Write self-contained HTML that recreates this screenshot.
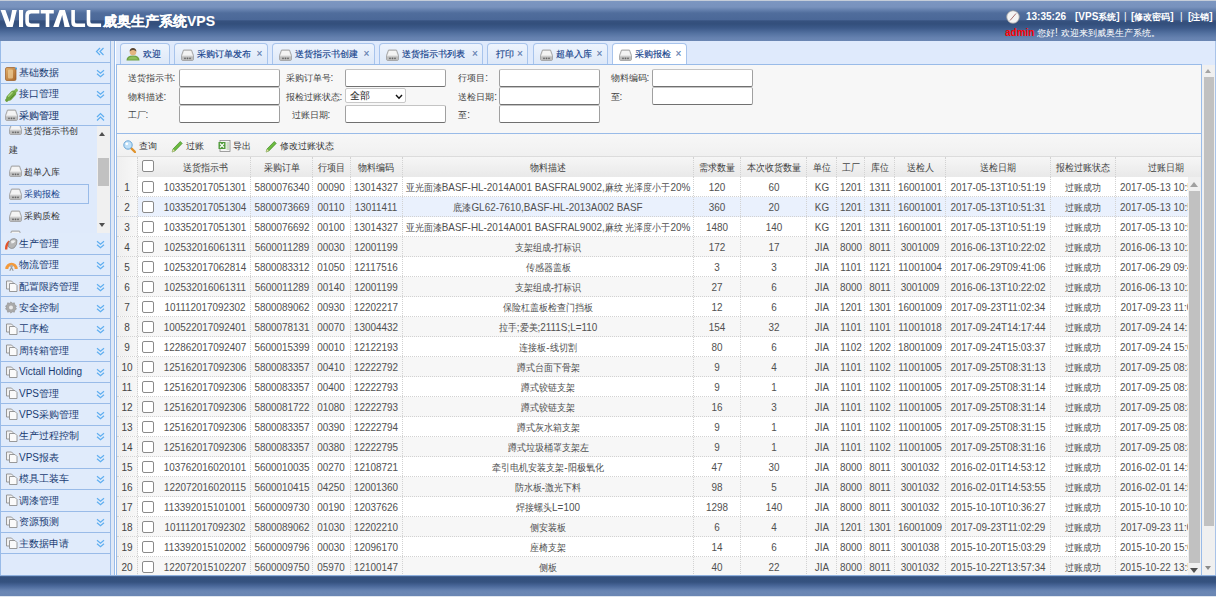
<!DOCTYPE html>
<html><head><meta charset="utf-8">
<style>
*{box-sizing:border-box;margin:0;padding:0}
html,body{width:1216px;height:597px;overflow:hidden}
body{position:relative;font-family:"Liberation Sans",sans-serif;font-size:10px;color:#333;background:#fff}
.a{position:absolute}
#hdr{position:absolute;left:0;top:0;width:1216px;height:41px;background:linear-gradient(to bottom,#c5cdd9 0,#c5cdd9 1px,#7c96c0 1px,#7892bd 7px,#6480ad 10px,#506d9c 13px,#4b6898 19.5px,#36517e 21px,#334f7c 24px,#3c5989 28px,#52709f 33px,#6682b0 38px,#6a86b3 41px)}
#title{position:absolute;left:103px;top:13px;font-size:14px;font-weight:bold;color:#fff;-webkit-text-stroke:0.1px #fff;line-height:16px;white-space:nowrap}
.ht{position:absolute;color:#fff;font-weight:bold;font-size:10px;line-height:12px;white-space:nowrap}
#foot{position:absolute;left:0;top:575px;width:1216px;height:21px;background:linear-gradient(to bottom,#8fb0dd 0,#8fb0dd 1px,#33507e 1.6px,#35527f 7px,#4a689a 11px,#6481b0 15px,#6b87b4 17px,#6a86b3 21px)}
#footline{position:absolute;left:0;top:596px;width:1216px;height:1px;background:#dfe6ef}
/* sidebar */
#side{position:absolute;left:0;top:41px;width:111px;height:534px;background:#dfeafb;border-left:1px solid #99bbe8;border-right:1px solid #99bbe8}
#sidegap{position:absolute;left:111px;top:41px;width:4px;height:534px;background:#dfe8f6;border-right:1px solid #99bbe8}
.srow{position:absolute;left:0;width:109px;height:21.33px;border-bottom:1px solid #99bbe8;background:#e0ebfb}
.stx{position:absolute;left:18px;top:4.6px;font-size:10px;line-height:12px;color:#1a3c73;white-space:nowrap}
.stx.b{-webkit-text-stroke:0.1px #1a3c73}
.chev{position:absolute;left:95px;top:6.5px}
.sic{position:absolute;left:4px;top:4px;width:12px;height:12px}
/* tabs */
#tabs{position:absolute;left:116px;top:41px;width:1100px;height:24px;background:#dfeafc}
.tab{position:absolute;top:2px;height:21px;border:1px solid #a8c4ec;border-bottom:none;border-radius:4px 4px 0 0;background:linear-gradient(to bottom,#eef4fd,#dde8f8);font-size:10px;color:#15428b;-webkit-text-stroke:0.15px #15428b;line-height:19px;white-space:nowrap}
.tab.on{background:#fff;height:22px}
.tab .x{color:#6a86b3;font-size:10px;position:absolute;top:0}
#panel{position:absolute;left:116px;top:64px;width:1086px;height:511px;border-top:1px solid #99bbe8;border-left:1px solid #99bbe8;border-right:1px solid #99bbe8;background:#f7f7f7}
#form{position:absolute;left:0;top:0;width:1084px;height:69px;background:#f7f7f7;border-bottom:1px solid #99bbe8}
.lb{position:absolute;font-size:10px;color:#444;line-height:12px;white-space:nowrap}
.in{position:absolute;width:101px;height:18px;background:#fff;border:1px solid;border-color:#c4c4c4 #a0a0a0 #707070 #a0a0a0;border-radius:2px}
#tb{position:absolute;left:0;top:69px;width:1084px;height:23px;background:linear-gradient(to bottom,#f7f7f7,#f0f0f0)}
.tbt{position:absolute;top:6px;font-size:10px;color:#333;line-height:12px;white-space:nowrap}
#grid{position:absolute;left:0;top:91px;width:1084px;height:420px;overflow:hidden;background:#fff}
.hd{position:absolute;left:0;top:0;width:1100px;height:21px;background:linear-gradient(to bottom,#f6f6f6,#e9e9e9);border-top:1px solid #dcdcdc}
.r{position:absolute;left:0;width:1100px;height:20px;background:#fff;border-bottom:1px dotted #d2d2d2}
.r.alt{background:#f7f7f7}
.r.sel{background:#eaf1fd}
.c{position:absolute;top:0;height:100%;border-right:1px dotted #d2d2d2;text-align:center;font-size:10px;line-height:19px;padding-top:1px;color:#505050;white-space:nowrap;overflow:hidden}
.hd .c{line-height:19px;padding-top:0;color:#444}
.rn{position:absolute;left:0;top:0;width:21px;height:100%;background:linear-gradient(to right,#efefef,#f7f7f7);border-right:1px dotted #d0d0d0;text-align:center;line-height:19px;padding-top:1px;font-size:10px;color:#444}
.cb{position:absolute;left:21px;top:0;width:22px;height:100%}
.cb i{position:absolute;left:4px;top:4px;width:12px;height:12px;border:1px solid #8a8a8a;border-radius:2px;background:#fff}
#vs1{position:absolute;left:1071px;top:21px;width:13px;height:399px;background:#f0f0f0}
#vs2{position:absolute;left:1202px;top:65px;width:13px;height:510px;background:#f0f0f0}
#rline{position:absolute;left:1215px;top:41px;width:1px;height:534px;background:#a9c3e8}
.thumb{position:absolute;background:#c1c1c1}
.arr{position:absolute;width:0;height:0;border-left:4px solid transparent;border-right:4px solid transparent}
.selbox{position:absolute;width:61px;height:15px;background:#fff;border:1px solid #c8c8c8;border-radius:2px;font-size:11px;color:#222;line-height:13px;white-space:nowrap}
.selbox > span{position:absolute;left:4px;top:0}
.k{font-size:0.94em}
.stx .k{font-size:0.95em}
#title .k{font-size:1em}
.ht .k{font-size:0.87em}
#sub{position:absolute;left:0;top:85px;width:109px;height:107.2px;overflow:hidden;background:#dfeafb}
.sit{position:absolute;font-size:10px;line-height:12px;color:#333;white-space:nowrap}
.ssel{position:absolute;border:1px solid #99bbe8;border-left:none}
.ssb{position:absolute;left:96.3px;top:0;width:12.5px;height:107.2px;background:#f0f0f0}
.sx{position:absolute;left:50%;top:0;font-size:11px;line-height:20px;transform:translateX(-50%) scaleX(0.9);white-space:nowrap}
.r .c .k{font-size:0.94em}
.hd .cb i{top:3px}
</style></head><body>
<div id="hdr"></div>
<svg class="a" style="left:0;top:0" width="102" height="41" viewBox="0 0 102 41">
<g fill="#fff">
<polygon points="0.6,10 5.4,10 9.75,22 12.2,10 16.8,10 12.7,27 6.8,27"/>
<rect x="19" y="10" width="4.1" height="17"/>
<path d="M39.4,10 H30.5 Q25.3,10 25.3,15.2 V21.8 Q25.3,27 30.5,27 H39.4 V23.6 H31.3 Q28.9,23.6 28.9,21.2 V15.8 Q28.9,13.4 31.3,13.4 H39.4 Z"/>
<path d="M40.7,10 H53.8 V13.4 H49.3 V27 H45.7 V13.4 H40.7 Z"/>
<polygon points="59.5,10 64.9,10 69.9,27 64.5,27 62.2,15 58.6,27 53.2,27"/>
<path d="M71.3,10 H74.9 V21.4 Q74.9,23.6 77.1,23.6 H85.1 V27 H75.8 Q71.3,27 71.3,22.5 Z"/>
<path d="M86.7,10 H90.3 V21.4 Q90.3,23.6 92.5,23.6 H101.1 V27 H91.2 Q86.7,27 86.7,22.5 Z"/>
</g></svg>
<div id="title"><span class="k">威奥生产系统</span>VPS</div>
<svg class="a" style="left:1006px;top:10px" width="14" height="14" viewBox="0 0 14 14"><circle cx="7" cy="7" r="6.3" fill="#f4f4f4" stroke="#9a9a9a" stroke-width="0.8"/><path d="M4 10.5 L10 3.5" stroke="#a06060" stroke-width="0.9"/></svg>
<div class="ht" style="left:1026px;top:11px">13:35:26</div>
<div class="ht" style="left:1075px;top:11px">[VPS<span class="k">系统</span>]</div>
<div class="ht" style="left:1124px;top:11px;font-weight:normal">|</div>
<div class="ht" style="left:1131px;top:11px">[<span class="k">修改密码</span>]</div>
<div class="ht" style="left:1180px;top:11px;font-weight:normal">|</div>
<div class="ht" style="left:1188px;top:11px">[<span class="k">注销</span>]</div>
<div class="ht" style="left:1005px;top:27px;color:#f00">admin</div>
<div class="ht" style="left:1037px;top:27px;font-weight:normal"><span class="k">您好</span>! <span class="k">欢迎来到威奥生产系统。</span></div>

<div id="side">
<div class="srow" style="top:0;height:22px"><svg class="chev" style="top:6px;left:94px" width="9" height="9" viewBox="0 0 9 9"><path d="M5 1 L1.5 4.5 L5 8 M8.5 1 L5 4.5 L8.5 8" fill="none" stroke="#5eaef0" stroke-width="1.2"/></svg></div>
<div class="srow" style="top:21.60px;height:21.20px"><span class="sic"><svg width="12" height="14" viewBox="0 0 12 14"><defs><linearGradient id="gb" x1="0" y1="0" x2="1" y2="1"><stop offset="0" stop-color="#e3b06a"/><stop offset="1" stop-color="#a9662a"/></linearGradient></defs><rect x="0.5" y="0.5" width="10.5" height="13" rx="1.5" fill="url(#gb)" stroke="#9a5a22" stroke-width="0.7"/><rect x="3" y="2.5" width="5" height="9" rx="1" fill="#f0cf98" opacity="0.7"/><circle cx="11.2" cy="1.5" r="1" fill="#4aa3e8"/></svg></span><span class="stx"><span class="k">基础数据</span></span><svg class="chev" width="9" height="9" viewBox="0 0 9 9"><path d="M1 1.3 L4.5 4.3 L8 1.3 M1 4.8 L4.5 7.8 L8 4.8" fill="none" stroke="#5eaef0" stroke-width="1.2"/></svg></div><div class="srow" style="top:42.80px;height:21.20px"><span class="sic"><svg width="13" height="14" viewBox="0 0 13 14"><path d="M1.8 12.2 L3.6 10.4" stroke="#6b9e3c" stroke-width="3.2" stroke-linecap="round"/><path d="M9 4.6 L11.3 2.3" stroke="#86b858" stroke-width="3.2" stroke-linecap="round"/><path d="M4.3 9.7 L8.2 5.6" stroke="#6fa540" stroke-width="5.8" stroke-linecap="round"/><path d="M3.6 8.2 L7.2 4.6" stroke="#a8d27c" stroke-width="1.4" stroke-linecap="round"/><path d="M5.2 10.8 L9.5 6.6" stroke="#4f8a26" stroke-width="0.9"/></svg></span><span class="stx"><span class="k">接口管理</span></span><svg class="chev" width="9" height="9" viewBox="0 0 9 9"><path d="M1 1.3 L4.5 4.3 L8 1.3 M1 4.8 L4.5 7.8 L8 4.8" fill="none" stroke="#5eaef0" stroke-width="1.2"/></svg></div><div class="srow" style="top:64.00px;height:21.20px"><span class="sic"><svg width="13" height="12" viewBox="0 0 13 12"><path d="M2.5 1 H10.5 L12.5 6.5 V10 Q12.5 11.5 11 11.5 H2 Q0.5 11.5 0.5 10 V6.5 Z" fill="#d8d8d8" stroke="#9a9a9a" stroke-width="0.8"/><path d="M3 2 H10 L11.5 6.5 H1.5 Z" fill="#f4f4f4"/><rect x="1" y="7.5" width="11" height="3.5" fill="#bdbdbd"/><circle cx="4" cy="9.3" r="0.9" fill="#666"/><circle cx="6.5" cy="9.3" r="0.9" fill="#666"/><circle cx="9" cy="9.3" r="0.9" fill="#666"/></svg></span><span class="stx b"><span class="k">采购管理</span></span><svg class="chev" width="9" height="9" viewBox="0 0 9 9"><path d="M1 5 L4.5 1.5 L8 5 M1 8.5 L4.5 5 L8 8.5" fill="none" stroke="#5eaef0" stroke-width="1.2"/></svg></div><div class="srow" style="top:192.20px;height:21.41px"><span class="sic"><svg width="13" height="13" viewBox="0 0 13 13"><path d="M1.2 12.5 Q1 7 4.5 4.5" stroke="#e5532a" stroke-width="2.4" fill="none"/><path d="M3.5 10 Q2.5 5 6.5 2 Q10 0.5 12 3 Q12.5 8 9 11 Q6 12.5 3.5 10 Z" fill="#b5b5b5" stroke="#7a7a7a" stroke-width="0.6"/><path d="M6 4 Q8.5 2.5 10.5 4 Q9 6.5 6.5 6.5 Z" fill="#eee"/></svg></span><span class="stx"><span class="k">生产管理</span></span><svg class="chev" width="9" height="9" viewBox="0 0 9 9"><path d="M1 1.3 L4.5 4.3 L8 1.3 M1 4.8 L4.5 7.8 L8 4.8" fill="none" stroke="#5eaef0" stroke-width="1.2"/></svg></div><div class="srow" style="top:213.61px;height:21.41px"><span class="sic"><svg width="13" height="12" viewBox="0 0 13 12"><path d="M1.8 10 A4.7 4.7 0 0 1 11.2 10" stroke="#f39a3c" stroke-width="3" fill="none"/><circle cx="6.5" cy="7.2" r="1.4" fill="#b0b0b0"/><path d="M4.8 11.8 L6.5 8.5 L8.2 11.8" stroke="#999" stroke-width="1.1" fill="none"/></svg></span><span class="stx"><span class="k">物流管理</span></span><svg class="chev" width="9" height="9" viewBox="0 0 9 9"><path d="M1 1.3 L4.5 4.3 L8 1.3 M1 4.8 L4.5 7.8 L8 4.8" fill="none" stroke="#5eaef0" stroke-width="1.2"/></svg></div><div class="srow" style="top:235.02px;height:21.41px"><span class="sic"><svg width="13" height="12" viewBox="0 0 13 12"><path d="M1.5 1 H6.5 L8 2.5 V9 H1.5 Z" fill="#f2f2f2" stroke="#8e8e8e" stroke-width="0.9"/><path d="M4.5 3.5 H10 L12 5.5 V11.5 H4.5 Z" fill="#fafafa" stroke="#8e8e8e" stroke-width="0.9"/></svg></span><span class="stx"><span class="k">配置限跨管理</span></span><svg class="chev" width="9" height="9" viewBox="0 0 9 9"><path d="M1 1.3 L4.5 4.3 L8 1.3 M1 4.8 L4.5 7.8 L8 4.8" fill="none" stroke="#5eaef0" stroke-width="1.2"/></svg></div><div class="srow" style="top:256.43px;height:21.41px"><span class="sic"><svg width="12" height="13" viewBox="0 0 12 13"><path d="M6 0.8 L7.4 2.2 L9.4 1.8 L9.8 3.8 L11.5 5 L10.6 6.5 L11.5 8 L9.8 9.2 L9.4 11.2 L7.4 10.8 L6 12.2 L4.6 10.8 L2.6 11.2 L2.2 9.2 L0.5 8 L1.4 6.5 L0.5 5 L2.2 3.8 L2.6 1.8 L4.6 2.2 Z" fill="#a9a9a9" stroke="#8a8a8a" stroke-width="0.5"/><circle cx="6" cy="6.5" r="2" fill="#e8e8e8"/></svg></span><span class="stx"><span class="k">安全控制</span></span><svg class="chev" width="9" height="9" viewBox="0 0 9 9"><path d="M1 1.3 L4.5 4.3 L8 1.3 M1 4.8 L4.5 7.8 L8 4.8" fill="none" stroke="#5eaef0" stroke-width="1.2"/></svg></div><div class="srow" style="top:277.84px;height:21.41px"><span class="sic"><svg width="13" height="12" viewBox="0 0 13 12"><path d="M1.5 1 H6.5 L8 2.5 V9 H1.5 Z" fill="#f2f2f2" stroke="#8e8e8e" stroke-width="0.9"/><path d="M4.5 3.5 H10 L12 5.5 V11.5 H4.5 Z" fill="#fafafa" stroke="#8e8e8e" stroke-width="0.9"/></svg></span><span class="stx"><span class="k">工序检</span></span><svg class="chev" width="9" height="9" viewBox="0 0 9 9"><path d="M1 1.3 L4.5 4.3 L8 1.3 M1 4.8 L4.5 7.8 L8 4.8" fill="none" stroke="#5eaef0" stroke-width="1.2"/></svg></div><div class="srow" style="top:299.25px;height:21.41px"><span class="sic"><svg width="13" height="12" viewBox="0 0 13 12"><path d="M1.5 1 H6.5 L8 2.5 V9 H1.5 Z" fill="#f2f2f2" stroke="#8e8e8e" stroke-width="0.9"/><path d="M4.5 3.5 H10 L12 5.5 V11.5 H4.5 Z" fill="#fafafa" stroke="#8e8e8e" stroke-width="0.9"/></svg></span><span class="stx"><span class="k">周转箱管理</span></span><svg class="chev" width="9" height="9" viewBox="0 0 9 9"><path d="M1 1.3 L4.5 4.3 L8 1.3 M1 4.8 L4.5 7.8 L8 4.8" fill="none" stroke="#5eaef0" stroke-width="1.2"/></svg></div><div class="srow" style="top:320.66px;height:21.41px"><span class="sic"><svg width="13" height="12" viewBox="0 0 13 12"><path d="M1.5 1 H6.5 L8 2.5 V9 H1.5 Z" fill="#f2f2f2" stroke="#8e8e8e" stroke-width="0.9"/><path d="M4.5 3.5 H10 L12 5.5 V11.5 H4.5 Z" fill="#fafafa" stroke="#8e8e8e" stroke-width="0.9"/></svg></span><span class="stx">Victall Holding</span><svg class="chev" width="9" height="9" viewBox="0 0 9 9"><path d="M1 1.3 L4.5 4.3 L8 1.3 M1 4.8 L4.5 7.8 L8 4.8" fill="none" stroke="#5eaef0" stroke-width="1.2"/></svg></div><div class="srow" style="top:342.07px;height:21.41px"><span class="sic"><svg width="13" height="12" viewBox="0 0 13 12"><path d="M1.5 1 H6.5 L8 2.5 V9 H1.5 Z" fill="#f2f2f2" stroke="#8e8e8e" stroke-width="0.9"/><path d="M4.5 3.5 H10 L12 5.5 V11.5 H4.5 Z" fill="#fafafa" stroke="#8e8e8e" stroke-width="0.9"/></svg></span><span class="stx">VPS<span class="k">管理</span></span><svg class="chev" width="9" height="9" viewBox="0 0 9 9"><path d="M1 1.3 L4.5 4.3 L8 1.3 M1 4.8 L4.5 7.8 L8 4.8" fill="none" stroke="#5eaef0" stroke-width="1.2"/></svg></div><div class="srow" style="top:363.48px;height:21.41px"><span class="sic"><svg width="13" height="12" viewBox="0 0 13 12"><path d="M1.5 1 H6.5 L8 2.5 V9 H1.5 Z" fill="#f2f2f2" stroke="#8e8e8e" stroke-width="0.9"/><path d="M4.5 3.5 H10 L12 5.5 V11.5 H4.5 Z" fill="#fafafa" stroke="#8e8e8e" stroke-width="0.9"/></svg></span><span class="stx">VPS<span class="k">采购管理</span></span><svg class="chev" width="9" height="9" viewBox="0 0 9 9"><path d="M1 1.3 L4.5 4.3 L8 1.3 M1 4.8 L4.5 7.8 L8 4.8" fill="none" stroke="#5eaef0" stroke-width="1.2"/></svg></div><div class="srow" style="top:384.89px;height:21.41px"><span class="sic"><svg width="13" height="12" viewBox="0 0 13 12"><path d="M1.5 1 H6.5 L8 2.5 V9 H1.5 Z" fill="#f2f2f2" stroke="#8e8e8e" stroke-width="0.9"/><path d="M4.5 3.5 H10 L12 5.5 V11.5 H4.5 Z" fill="#fafafa" stroke="#8e8e8e" stroke-width="0.9"/></svg></span><span class="stx"><span class="k">生产过程控制</span></span><svg class="chev" width="9" height="9" viewBox="0 0 9 9"><path d="M1 1.3 L4.5 4.3 L8 1.3 M1 4.8 L4.5 7.8 L8 4.8" fill="none" stroke="#5eaef0" stroke-width="1.2"/></svg></div><div class="srow" style="top:406.30px;height:21.41px"><span class="sic"><svg width="13" height="12" viewBox="0 0 13 12"><path d="M1.5 1 H6.5 L8 2.5 V9 H1.5 Z" fill="#f2f2f2" stroke="#8e8e8e" stroke-width="0.9"/><path d="M4.5 3.5 H10 L12 5.5 V11.5 H4.5 Z" fill="#fafafa" stroke="#8e8e8e" stroke-width="0.9"/></svg></span><span class="stx">VPS<span class="k">报表</span></span><svg class="chev" width="9" height="9" viewBox="0 0 9 9"><path d="M1 1.3 L4.5 4.3 L8 1.3 M1 4.8 L4.5 7.8 L8 4.8" fill="none" stroke="#5eaef0" stroke-width="1.2"/></svg></div><div class="srow" style="top:427.71px;height:21.41px"><span class="sic"><svg width="13" height="12" viewBox="0 0 13 12"><path d="M1.5 1 H6.5 L8 2.5 V9 H1.5 Z" fill="#f2f2f2" stroke="#8e8e8e" stroke-width="0.9"/><path d="M4.5 3.5 H10 L12 5.5 V11.5 H4.5 Z" fill="#fafafa" stroke="#8e8e8e" stroke-width="0.9"/></svg></span><span class="stx"><span class="k">模具工装车</span></span><svg class="chev" width="9" height="9" viewBox="0 0 9 9"><path d="M1 1.3 L4.5 4.3 L8 1.3 M1 4.8 L4.5 7.8 L8 4.8" fill="none" stroke="#5eaef0" stroke-width="1.2"/></svg></div><div class="srow" style="top:449.12px;height:21.41px"><span class="sic"><svg width="13" height="12" viewBox="0 0 13 12"><path d="M1.5 1 H6.5 L8 2.5 V9 H1.5 Z" fill="#f2f2f2" stroke="#8e8e8e" stroke-width="0.9"/><path d="M4.5 3.5 H10 L12 5.5 V11.5 H4.5 Z" fill="#fafafa" stroke="#8e8e8e" stroke-width="0.9"/></svg></span><span class="stx"><span class="k">调漆管理</span></span><svg class="chev" width="9" height="9" viewBox="0 0 9 9"><path d="M1 1.3 L4.5 4.3 L8 1.3 M1 4.8 L4.5 7.8 L8 4.8" fill="none" stroke="#5eaef0" stroke-width="1.2"/></svg></div><div class="srow" style="top:470.53px;height:21.41px"><span class="sic"><svg width="13" height="12" viewBox="0 0 13 12"><path d="M1.5 1 H6.5 L8 2.5 V9 H1.5 Z" fill="#f2f2f2" stroke="#8e8e8e" stroke-width="0.9"/><path d="M4.5 3.5 H10 L12 5.5 V11.5 H4.5 Z" fill="#fafafa" stroke="#8e8e8e" stroke-width="0.9"/></svg></span><span class="stx"><span class="k">资源预测</span></span><svg class="chev" width="9" height="9" viewBox="0 0 9 9"><path d="M1 1.3 L4.5 4.3 L8 1.3 M1 4.8 L4.5 7.8 L8 4.8" fill="none" stroke="#5eaef0" stroke-width="1.2"/></svg></div><div class="srow" style="top:491.94px;height:21.41px"><span class="sic"><svg width="13" height="12" viewBox="0 0 13 12"><path d="M1.5 1 H6.5 L8 2.5 V9 H1.5 Z" fill="#f2f2f2" stroke="#8e8e8e" stroke-width="0.9"/><path d="M4.5 3.5 H10 L12 5.5 V11.5 H4.5 Z" fill="#fafafa" stroke="#8e8e8e" stroke-width="0.9"/></svg></span><span class="stx"><span class="k">主数据申请</span></span><svg class="chev" width="9" height="9" viewBox="0 0 9 9"><path d="M1 1.3 L4.5 4.3 L8 1.3 M1 4.8 L4.5 7.8 L8 4.8" fill="none" stroke="#5eaef0" stroke-width="1.2"/></svg></div>
<div id="sub">
<span class="sic" style="left:8px;top:-3px"><svg width="13" height="12" viewBox="0 0 13 12"><path d="M2.5 1 H10.5 L12.5 6.5 V10 Q12.5 11.5 11 11.5 H2 Q0.5 11.5 0.5 10 V6.5 Z" fill="#d8d8d8" stroke="#9a9a9a" stroke-width="0.8"/><path d="M3 2 H10 L11.5 6.5 H1.5 Z" fill="#f4f4f4"/><rect x="1" y="7.5" width="11" height="3.5" fill="#bdbdbd"/><circle cx="4" cy="9.3" r="0.9" fill="#666"/><circle cx="6.5" cy="9.3" r="0.9" fill="#666"/><circle cx="9" cy="9.3" r="0.9" fill="#666"/></svg></span><span class="sit" style="left:23px;top:-1px"><span class="k">送货指示书创</span></span>
<span class="sit" style="left:8px;top:17.5px"><span class="k">建</span></span>
<span class="sic" style="left:8px;top:38.5px"><svg width="13" height="12" viewBox="0 0 13 12"><path d="M2.5 1 H10.5 L12.5 6.5 V10 Q12.5 11.5 11 11.5 H2 Q0.5 11.5 0.5 10 V6.5 Z" fill="#d8d8d8" stroke="#9a9a9a" stroke-width="0.8"/><path d="M3 2 H10 L11.5 6.5 H1.5 Z" fill="#f4f4f4"/><rect x="1" y="7.5" width="11" height="3.5" fill="#bdbdbd"/><circle cx="4" cy="9.3" r="0.9" fill="#666"/><circle cx="6.5" cy="9.3" r="0.9" fill="#666"/><circle cx="9" cy="9.3" r="0.9" fill="#666"/></svg></span><span class="sit" style="left:23px;top:39.5px"><span class="k">超单入库</span></span>
<div class="ssel" style="left:8px;top:57.5px;width:80px;height:20px"></div>
<span class="sic" style="left:8px;top:61.5px"><svg width="13" height="12" viewBox="0 0 13 12"><path d="M2.5 1 H10.5 L12.5 6.5 V10 Q12.5 11.5 11 11.5 H2 Q0.5 11.5 0.5 10 V6.5 Z" fill="#d8d8d8" stroke="#9a9a9a" stroke-width="0.8"/><path d="M3 2 H10 L11.5 6.5 H1.5 Z" fill="#f4f4f4"/><rect x="1" y="7.5" width="11" height="3.5" fill="#bdbdbd"/><circle cx="4" cy="9.3" r="0.9" fill="#666"/><circle cx="6.5" cy="9.3" r="0.9" fill="#666"/><circle cx="9" cy="9.3" r="0.9" fill="#666"/></svg></span><span class="sit" style="left:23px;top:62px;color:#15428b"><span class="k">采购报检</span></span>
<span class="sic" style="left:8px;top:84px"><svg width="13" height="12" viewBox="0 0 13 12"><path d="M2.5 1 H10.5 L12.5 6.5 V10 Q12.5 11.5 11 11.5 H2 Q0.5 11.5 0.5 10 V6.5 Z" fill="#d8d8d8" stroke="#9a9a9a" stroke-width="0.8"/><path d="M3 2 H10 L11.5 6.5 H1.5 Z" fill="#f4f4f4"/><rect x="1" y="7.5" width="11" height="3.5" fill="#bdbdbd"/><circle cx="4" cy="9.3" r="0.9" fill="#666"/><circle cx="6.5" cy="9.3" r="0.9" fill="#666"/><circle cx="9" cy="9.3" r="0.9" fill="#666"/></svg></span><span class="sit" style="left:23px;top:84px"><span class="k">采购质检</span></span>
<span class="sic" style="left:8px;top:104px"><svg width="13" height="12" viewBox="0 0 13 12"><path d="M2.5 1 H10.5 L12.5 6.5 V10 Q12.5 11.5 11 11.5 H2 Q0.5 11.5 0.5 10 V6.5 Z" fill="#d8d8d8" stroke="#9a9a9a" stroke-width="0.8"/><path d="M3 2 H10 L11.5 6.5 H1.5 Z" fill="#f4f4f4"/><rect x="1" y="7.5" width="11" height="3.5" fill="#bdbdbd"/><circle cx="4" cy="9.3" r="0.9" fill="#666"/><circle cx="6.5" cy="9.3" r="0.9" fill="#666"/><circle cx="9" cy="9.3" r="0.9" fill="#666"/></svg></span>
<div class="ssb"><div class="arr" style="left:2px;top:6px;border-bottom:4px solid #505050;border-left-width:3.5px;border-right-width:3.5px"></div><div class="thumb" style="left:1px;top:32px;width:10.5px;height:27.5px"></div><div class="arr" style="left:2px;top:97px;border-top:4px solid #505050;border-left-width:3.5px;border-right-width:3.5px"></div></div>
</div>
</div>
<div id="sidegap"></div>

<div id="tabs">
<div class="tab" style="left:3.5px;width:50px"><span class="sic" style="left:5px;top:3px"><svg width="14" height="14" viewBox="0 0 14 14"><path d="M0.5 13.5 Q0.5 8.5 7 8.5 Q13.5 8.5 13.5 13.5 Z" fill="#6ea043"/><path d="M2 12.5 Q3 9.8 7 9.6 Q11 9.8 12 12.5" fill="#8fc05e"/><circle cx="7" cy="5" r="3.3" fill="#e4b582"/><path d="M3.6 4.6 Q3.8 1 7 1 Q10.2 1 10.4 4.6 Q9 2.8 7 3 Q5 2.8 3.6 4.6 Z" fill="#5a4632"/></svg></span><span class="a" style="left:22px;top:0"><span class="k">欢迎</span></span></div>
<div class="tab" style="left:57.5px;width:94px"><span class="sic" style="left:6px;top:4px"><svg width="13" height="12" viewBox="0 0 13 12"><path d="M2.5 1 H10.5 L12.5 6.5 V10 Q12.5 11.5 11 11.5 H2 Q0.5 11.5 0.5 10 V6.5 Z" fill="#d8d8d8" stroke="#9a9a9a" stroke-width="0.8"/><path d="M3 2 H10 L11.5 6.5 H1.5 Z" fill="#f4f4f4"/><rect x="1" y="7.5" width="11" height="3.5" fill="#bdbdbd"/><circle cx="4" cy="9.3" r="0.9" fill="#666"/><circle cx="6.5" cy="9.3" r="0.9" fill="#666"/><circle cx="9" cy="9.3" r="0.9" fill="#666"/></svg></span><span class="a" style="left:22px;top:0"><span class="k">采购订单发布</span></span><span class="x" style="left:82px">×</span></div>
<div class="tab" style="left:155.5px;width:103px"><span class="sic" style="left:6px;top:4px"><svg width="13" height="12" viewBox="0 0 13 12"><path d="M2.5 1 H10.5 L12.5 6.5 V10 Q12.5 11.5 11 11.5 H2 Q0.5 11.5 0.5 10 V6.5 Z" fill="#d8d8d8" stroke="#9a9a9a" stroke-width="0.8"/><path d="M3 2 H10 L11.5 6.5 H1.5 Z" fill="#f4f4f4"/><rect x="1" y="7.5" width="11" height="3.5" fill="#bdbdbd"/><circle cx="4" cy="9.3" r="0.9" fill="#666"/><circle cx="6.5" cy="9.3" r="0.9" fill="#666"/><circle cx="9" cy="9.3" r="0.9" fill="#666"/></svg></span><span class="a" style="left:22px;top:0"><span class="k">送货指示书创建</span></span><span class="x" style="left:91px">×</span></div>
<div class="tab" style="left:263px;width:104px"><span class="sic" style="left:6px;top:4px"><svg width="13" height="12" viewBox="0 0 13 12"><path d="M2.5 1 H10.5 L12.5 6.5 V10 Q12.5 11.5 11 11.5 H2 Q0.5 11.5 0.5 10 V6.5 Z" fill="#d8d8d8" stroke="#9a9a9a" stroke-width="0.8"/><path d="M3 2 H10 L11.5 6.5 H1.5 Z" fill="#f4f4f4"/><rect x="1" y="7.5" width="11" height="3.5" fill="#bdbdbd"/><circle cx="4" cy="9.3" r="0.9" fill="#666"/><circle cx="6.5" cy="9.3" r="0.9" fill="#666"/><circle cx="9" cy="9.3" r="0.9" fill="#666"/></svg></span><span class="a" style="left:22px;top:0"><span class="k">送货指示书列表</span></span><span class="x" style="left:92px">×</span></div>
<div class="tab" style="left:371px;width:41px"><span class="a" style="left:8px;top:0"><span class="k">打印</span></span><span class="x" style="left:29px">×</span></div>
<div class="tab" style="left:416.5px;width:75px"><span class="sic" style="left:6px;top:4px"><svg width="13" height="12" viewBox="0 0 13 12"><path d="M2.5 1 H10.5 L12.5 6.5 V10 Q12.5 11.5 11 11.5 H2 Q0.5 11.5 0.5 10 V6.5 Z" fill="#d8d8d8" stroke="#9a9a9a" stroke-width="0.8"/><path d="M3 2 H10 L11.5 6.5 H1.5 Z" fill="#f4f4f4"/><rect x="1" y="7.5" width="11" height="3.5" fill="#bdbdbd"/><circle cx="4" cy="9.3" r="0.9" fill="#666"/><circle cx="6.5" cy="9.3" r="0.9" fill="#666"/><circle cx="9" cy="9.3" r="0.9" fill="#666"/></svg></span><span class="a" style="left:22px;top:0"><span class="k">超单入库</span></span><span class="x" style="left:63px">×</span></div>
<div class="tab on" style="left:495.5px;width:75px"><span class="sic" style="left:6px;top:4px"><svg width="13" height="12" viewBox="0 0 13 12"><path d="M2.5 1 H10.5 L12.5 6.5 V10 Q12.5 11.5 11 11.5 H2 Q0.5 11.5 0.5 10 V6.5 Z" fill="#d8d8d8" stroke="#9a9a9a" stroke-width="0.8"/><path d="M3 2 H10 L11.5 6.5 H1.5 Z" fill="#f4f4f4"/><rect x="1" y="7.5" width="11" height="3.5" fill="#bdbdbd"/><circle cx="4" cy="9.3" r="0.9" fill="#666"/><circle cx="6.5" cy="9.3" r="0.9" fill="#666"/><circle cx="9" cy="9.3" r="0.9" fill="#666"/></svg></span><span class="a" style="left:22px;top:0"><span class="k">采购报检</span></span><span class="x" style="left:63px">×</span></div>
</div>
<div id="panel">
<div id="form"><div class="lb" style="left:10.6px;top:7.0px"><span class="k">送货指示书</span>:</div><div class="in" style="left:61.5px;top:3.5px;width:101px"></div><div class="lb" style="left:10.6px;top:26.0px"><span class="k">物料描述</span>:</div><div class="in" style="left:61.5px;top:22.0px;width:101px"></div><div class="lb" style="left:10.6px;top:44.0px"><span class="k">工厂</span>:</div><div class="in" style="left:61.5px;top:40.0px;width:101px"></div><div class="lb" style="left:168.6px;top:7.0px"><span class="k">采购订单号</span>:</div><div class="in" style="left:227.7px;top:3.5px;width:101px"></div><div class="lb" style="left:168.6px;top:26.0px"><span class="k">报检过账状态</span>:</div><div class="lb" style="left:174.5px;top:44.0px"><span class="k">过账日期</span>:</div><div class="in" style="left:227.7px;top:40.0px;width:101px"></div><div class="selbox" style="left:227.7px;top:23px"><span><span class="k">全部</span></span><svg class="a" style="left:49px;top:5px" width="8" height="6" viewBox="0 0 8 6"><path d="M1 1 L4 4.3 L7 1" fill="none" stroke="#111" stroke-width="1.4"/></svg></div><div class="lb" style="left:341.3px;top:7.0px"><span class="k">行项目</span>:</div><div class="in" style="left:381.8px;top:3.5px;width:101px"></div><div class="lb" style="left:341.3px;top:26.0px"><span class="k">送检日期</span>:</div><div class="in" style="left:381.8px;top:22.0px;width:101px"></div><div class="lb" style="left:341.3px;top:44.0px"><span class="k">至</span>:</div><div class="in" style="left:381.8px;top:40.0px;width:101px"></div><div class="lb" style="left:493.5px;top:7.0px"><span class="k">物料编码</span>:</div><div class="in" style="left:535.3px;top:3.5px;width:101px"></div><div class="lb" style="left:493.5px;top:26.0px"><span class="k">至</span>:</div><div class="in" style="left:535.3px;top:22.0px;width:101px"></div></div>
<div id="tb">
<span class="sic" style="left:5.8px;top:5.5px"><svg width="13" height="13" viewBox="0 0 13 13"><path d="M7.5 7.5 L12 12" stroke="#e0922a" stroke-width="2.4" stroke-linecap="round"/><circle cx="5" cy="5" r="4.2" fill="#bfe0f8" stroke="#6aa6d6" stroke-width="1"/><circle cx="3.8" cy="3.8" r="1.4" fill="#fff"/></svg></span><span class="tbt" style="left:22.2px"><span class="k">查询</span></span>
<span class="sic" style="left:54px;top:5.5px"><svg width="12" height="13" viewBox="0 0 12 13"><path d="M1.2 12 L2 9 L9.3 1.5 L11.2 3.4 L3.9 10.9 Z" fill="#6dbb3f" stroke="#3f8a26" stroke-width="0.7"/><path d="M1.2 12 L2 9 L3.9 10.9 Z" fill="#e8d8a8"/></svg></span><span class="tbt" style="left:69px"><span class="k">过账</span></span>
<span class="sic" style="left:100.6px;top:5.5px"><svg width="13" height="12" viewBox="0 0 13 12"><rect x="2" y="0.5" width="10" height="11" fill="#f4f4f4" stroke="#8a8a8a" stroke-width="0.8"/><rect x="0.5" y="2" width="7" height="7" fill="#4f9a3a"/><path d="M2 3.5 L6 7.5 M6 3.5 L2 7.5" stroke="#fff" stroke-width="1.1"/><path d="M8.5 3 H11 M8.5 5 H11 M8.5 7 H11 M8.5 9 H11" stroke="#9ac088" stroke-width="0.8"/></svg></span><span class="tbt" style="left:116.3px"><span class="k">导出</span></span>
<span class="sic" style="left:148px;top:5.5px"><svg width="12" height="13" viewBox="0 0 12 13"><path d="M1.2 12 L2 9 L9.3 1.5 L11.2 3.4 L3.9 10.9 Z" fill="#6dbb3f" stroke="#3f8a26" stroke-width="0.7"/><path d="M1.2 12 L2 9 L3.9 10.9 Z" fill="#e8d8a8"/></svg></span><span class="tbt" style="left:163px"><span class="k">修改过账状态</span></span>
</div>
<div id="grid">
<div class="hd"><div class="rn"></div><div class="cb"><i></i></div><div class="c" style="left:42.0px;width:92.0px"><span class="sx"><span class="k">送货指示书</span></span></div><div class="c" style="left:134.0px;width:62.0px"><span class="sx"><span class="k">采购订单</span></span></div><div class="c" style="left:196.0px;width:37.5px"><span class="sx"><span class="k">行项目</span></span></div><div class="c" style="left:233.5px;width:52.5px"><span class="sx"><span class="k">物料编码</span></span></div><div class="c" style="left:286.0px;width:291.0px"><span class="sx"><span class="k">物料描述</span></span></div><div class="c" style="left:577.0px;width:47.0px"><span class="sx"><span class="k">需求数量</span></span></div><div class="c" style="left:624.0px;width:66.0px"><span class="sx"><span class="k">本次收货数量</span></span></div><div class="c" style="left:690.0px;width:30.0px"><span class="sx"><span class="k">单位</span></span></div><div class="c" style="left:720.0px;width:28.0px"><span class="sx"><span class="k">工厂</span></span></div><div class="c" style="left:748.0px;width:30.0px"><span class="sx"><span class="k">库位</span></span></div><div class="c" style="left:778.0px;width:51.0px"><span class="sx"><span class="k">送检人</span></span></div><div class="c" style="left:829.0px;width:104.5px"><span class="sx"><span class="k">送检日期</span></span></div><div class="c" style="left:933.5px;width:65.0px"><span class="sx"><span class="k">报检过账状态</span></span></div><div class="c" style="left:998.5px;width:102.5px"><span class="sx"><span class="k">过账日期</span></span></div></div>
<div class="r" style="top:21px"><div class="rn">1</div><div class="cb"><i></i></div><div class="c" style="left:42.0px;width:92.0px"><span class="sx">103352017051301</span></div><div class="c" style="left:134.0px;width:62.0px"><span class="sx">5800076340</span></div><div class="c" style="left:196.0px;width:37.5px"><span class="sx">00090</span></div><div class="c" style="left:233.5px;width:52.5px"><span class="sx">13014327</span></div><div class="c" style="left:286.0px;width:291.0px"><span class="sx"><span class="k">亚光面漆</span>BASF-HL-2014A001 BASFRAL9002,<span class="k">麻纹</span> <span class="k">光泽度小于</span>20%</span></div><div class="c" style="left:577.0px;width:47.0px"><span class="sx">120</span></div><div class="c" style="left:624.0px;width:66.0px"><span class="sx">60</span></div><div class="c" style="left:690.0px;width:30.0px"><span class="sx">KG</span></div><div class="c" style="left:720.0px;width:28.0px"><span class="sx">1201</span></div><div class="c" style="left:748.0px;width:30.0px"><span class="sx">1311</span></div><div class="c" style="left:778.0px;width:51.0px"><span class="sx">16001001</span></div><div class="c" style="left:829.0px;width:104.5px"><span class="sx">2017-05-13T10:51:19</span></div><div class="c" style="left:933.5px;width:65.0px"><span class="sx"><span class="k">过账成功</span></span></div><div class="c" style="left:998.5px;width:102.5px"><span class="sx">2017-05-13 10:51:19</span></div></div><div class="r alt sel" style="top:41px"><div class="rn">2</div><div class="cb"><i></i></div><div class="c" style="left:42.0px;width:92.0px"><span class="sx">103352017051304</span></div><div class="c" style="left:134.0px;width:62.0px"><span class="sx">5800073669</span></div><div class="c" style="left:196.0px;width:37.5px"><span class="sx">00110</span></div><div class="c" style="left:233.5px;width:52.5px"><span class="sx">13011411</span></div><div class="c" style="left:286.0px;width:291.0px"><span class="sx"><span class="k">底漆</span>GL62-7610,BASF-HL-2013A002 BASF</span></div><div class="c" style="left:577.0px;width:47.0px"><span class="sx">360</span></div><div class="c" style="left:624.0px;width:66.0px"><span class="sx">20</span></div><div class="c" style="left:690.0px;width:30.0px"><span class="sx">KG</span></div><div class="c" style="left:720.0px;width:28.0px"><span class="sx">1201</span></div><div class="c" style="left:748.0px;width:30.0px"><span class="sx">1311</span></div><div class="c" style="left:778.0px;width:51.0px"><span class="sx">16001001</span></div><div class="c" style="left:829.0px;width:104.5px"><span class="sx">2017-05-13T10:51:31</span></div><div class="c" style="left:933.5px;width:65.0px"><span class="sx"><span class="k">过账成功</span></span></div><div class="c" style="left:998.5px;width:102.5px"><span class="sx">2017-05-13 10:51:31</span></div></div><div class="r" style="top:61px"><div class="rn">3</div><div class="cb"><i></i></div><div class="c" style="left:42.0px;width:92.0px"><span class="sx">103352017051301</span></div><div class="c" style="left:134.0px;width:62.0px"><span class="sx">5800076692</span></div><div class="c" style="left:196.0px;width:37.5px"><span class="sx">00100</span></div><div class="c" style="left:233.5px;width:52.5px"><span class="sx">13014327</span></div><div class="c" style="left:286.0px;width:291.0px"><span class="sx"><span class="k">亚光面漆</span>BASF-HL-2014A001 BASFRAL9002,<span class="k">麻纹</span> <span class="k">光泽度小于</span>20%</span></div><div class="c" style="left:577.0px;width:47.0px"><span class="sx">1480</span></div><div class="c" style="left:624.0px;width:66.0px"><span class="sx">140</span></div><div class="c" style="left:690.0px;width:30.0px"><span class="sx">KG</span></div><div class="c" style="left:720.0px;width:28.0px"><span class="sx">1201</span></div><div class="c" style="left:748.0px;width:30.0px"><span class="sx">1311</span></div><div class="c" style="left:778.0px;width:51.0px"><span class="sx">16001001</span></div><div class="c" style="left:829.0px;width:104.5px"><span class="sx">2017-05-13T10:51:19</span></div><div class="c" style="left:933.5px;width:65.0px"><span class="sx"><span class="k">过账成功</span></span></div><div class="c" style="left:998.5px;width:102.5px"><span class="sx">2017-05-13 10:51:19</span></div></div><div class="r alt" style="top:81px"><div class="rn">4</div><div class="cb"><i></i></div><div class="c" style="left:42.0px;width:92.0px"><span class="sx">102532016061311</span></div><div class="c" style="left:134.0px;width:62.0px"><span class="sx">5600011289</span></div><div class="c" style="left:196.0px;width:37.5px"><span class="sx">00030</span></div><div class="c" style="left:233.5px;width:52.5px"><span class="sx">12001199</span></div><div class="c" style="left:286.0px;width:291.0px"><span class="sx"><span class="k">支架组成</span>-<span class="k">打标识</span></span></div><div class="c" style="left:577.0px;width:47.0px"><span class="sx">172</span></div><div class="c" style="left:624.0px;width:66.0px"><span class="sx">17</span></div><div class="c" style="left:690.0px;width:30.0px"><span class="sx">JIA</span></div><div class="c" style="left:720.0px;width:28.0px"><span class="sx">8000</span></div><div class="c" style="left:748.0px;width:30.0px"><span class="sx">8011</span></div><div class="c" style="left:778.0px;width:51.0px"><span class="sx">3001009</span></div><div class="c" style="left:829.0px;width:104.5px"><span class="sx">2016-06-13T10:22:02</span></div><div class="c" style="left:933.5px;width:65.0px"><span class="sx"><span class="k">过账成功</span></span></div><div class="c" style="left:998.5px;width:102.5px"><span class="sx">2016-06-13 10:22:02</span></div></div><div class="r" style="top:101px"><div class="rn">5</div><div class="cb"><i></i></div><div class="c" style="left:42.0px;width:92.0px"><span class="sx">102532017062814</span></div><div class="c" style="left:134.0px;width:62.0px"><span class="sx">5800083312</span></div><div class="c" style="left:196.0px;width:37.5px"><span class="sx">01050</span></div><div class="c" style="left:233.5px;width:52.5px"><span class="sx">12117516</span></div><div class="c" style="left:286.0px;width:291.0px"><span class="sx"><span class="k">传感器盖板</span></span></div><div class="c" style="left:577.0px;width:47.0px"><span class="sx">3</span></div><div class="c" style="left:624.0px;width:66.0px"><span class="sx">3</span></div><div class="c" style="left:690.0px;width:30.0px"><span class="sx">JIA</span></div><div class="c" style="left:720.0px;width:28.0px"><span class="sx">1101</span></div><div class="c" style="left:748.0px;width:30.0px"><span class="sx">1121</span></div><div class="c" style="left:778.0px;width:51.0px"><span class="sx">11001004</span></div><div class="c" style="left:829.0px;width:104.5px"><span class="sx">2017-06-29T09:41:06</span></div><div class="c" style="left:933.5px;width:65.0px"><span class="sx"><span class="k">过账成功</span></span></div><div class="c" style="left:998.5px;width:102.5px"><span class="sx">2017-06-29 09:41:06</span></div></div><div class="r alt" style="top:121px"><div class="rn">6</div><div class="cb"><i></i></div><div class="c" style="left:42.0px;width:92.0px"><span class="sx">102532016061311</span></div><div class="c" style="left:134.0px;width:62.0px"><span class="sx">5600011289</span></div><div class="c" style="left:196.0px;width:37.5px"><span class="sx">00140</span></div><div class="c" style="left:233.5px;width:52.5px"><span class="sx">12001199</span></div><div class="c" style="left:286.0px;width:291.0px"><span class="sx"><span class="k">支架组成</span>-<span class="k">打标识</span></span></div><div class="c" style="left:577.0px;width:47.0px"><span class="sx">27</span></div><div class="c" style="left:624.0px;width:66.0px"><span class="sx">6</span></div><div class="c" style="left:690.0px;width:30.0px"><span class="sx">JIA</span></div><div class="c" style="left:720.0px;width:28.0px"><span class="sx">8000</span></div><div class="c" style="left:748.0px;width:30.0px"><span class="sx">8011</span></div><div class="c" style="left:778.0px;width:51.0px"><span class="sx">3001009</span></div><div class="c" style="left:829.0px;width:104.5px"><span class="sx">2016-06-13T10:22:02</span></div><div class="c" style="left:933.5px;width:65.0px"><span class="sx"><span class="k">过账成功</span></span></div><div class="c" style="left:998.5px;width:102.5px"><span class="sx">2016-06-13 10:22:02</span></div></div><div class="r" style="top:141px"><div class="rn">7</div><div class="cb"><i></i></div><div class="c" style="left:42.0px;width:92.0px"><span class="sx">101112017092302</span></div><div class="c" style="left:134.0px;width:62.0px"><span class="sx">5800089062</span></div><div class="c" style="left:196.0px;width:37.5px"><span class="sx">00930</span></div><div class="c" style="left:233.5px;width:52.5px"><span class="sx">12202217</span></div><div class="c" style="left:286.0px;width:291.0px"><span class="sx"><span class="k">保险杠盖板检查门挡板</span></span></div><div class="c" style="left:577.0px;width:47.0px"><span class="sx">12</span></div><div class="c" style="left:624.0px;width:66.0px"><span class="sx">6</span></div><div class="c" style="left:690.0px;width:30.0px"><span class="sx">JIA</span></div><div class="c" style="left:720.0px;width:28.0px"><span class="sx">1201</span></div><div class="c" style="left:748.0px;width:30.0px"><span class="sx">1301</span></div><div class="c" style="left:778.0px;width:51.0px"><span class="sx">16001009</span></div><div class="c" style="left:829.0px;width:104.5px"><span class="sx">2017-09-23T11:02:34</span></div><div class="c" style="left:933.5px;width:65.0px"><span class="sx"><span class="k">过账成功</span></span></div><div class="c" style="left:998.5px;width:102.5px"><span class="sx">2017-09-23 11:02:34</span></div></div><div class="r alt" style="top:161px"><div class="rn">8</div><div class="cb"><i></i></div><div class="c" style="left:42.0px;width:92.0px"><span class="sx">100522017092401</span></div><div class="c" style="left:134.0px;width:62.0px"><span class="sx">5800078131</span></div><div class="c" style="left:196.0px;width:37.5px"><span class="sx">00070</span></div><div class="c" style="left:233.5px;width:52.5px"><span class="sx">13004432</span></div><div class="c" style="left:286.0px;width:291.0px"><span class="sx"><span class="k">拉手</span>;<span class="k">爱美</span>;2111S;L=110</span></div><div class="c" style="left:577.0px;width:47.0px"><span class="sx">154</span></div><div class="c" style="left:624.0px;width:66.0px"><span class="sx">32</span></div><div class="c" style="left:690.0px;width:30.0px"><span class="sx">JIA</span></div><div class="c" style="left:720.0px;width:28.0px"><span class="sx">1101</span></div><div class="c" style="left:748.0px;width:30.0px"><span class="sx">1101</span></div><div class="c" style="left:778.0px;width:51.0px"><span class="sx">11001018</span></div><div class="c" style="left:829.0px;width:104.5px"><span class="sx">2017-09-24T14:17:44</span></div><div class="c" style="left:933.5px;width:65.0px"><span class="sx"><span class="k">过账成功</span></span></div><div class="c" style="left:998.5px;width:102.5px"><span class="sx">2017-09-24 14:17:44</span></div></div><div class="r" style="top:181px"><div class="rn">9</div><div class="cb"><i></i></div><div class="c" style="left:42.0px;width:92.0px"><span class="sx">122862017092407</span></div><div class="c" style="left:134.0px;width:62.0px"><span class="sx">5600015399</span></div><div class="c" style="left:196.0px;width:37.5px"><span class="sx">00010</span></div><div class="c" style="left:233.5px;width:52.5px"><span class="sx">12122193</span></div><div class="c" style="left:286.0px;width:291.0px"><span class="sx"><span class="k">连接板</span>-<span class="k">线切割</span></span></div><div class="c" style="left:577.0px;width:47.0px"><span class="sx">80</span></div><div class="c" style="left:624.0px;width:66.0px"><span class="sx">6</span></div><div class="c" style="left:690.0px;width:30.0px"><span class="sx">JIA</span></div><div class="c" style="left:720.0px;width:28.0px"><span class="sx">1102</span></div><div class="c" style="left:748.0px;width:30.0px"><span class="sx">1202</span></div><div class="c" style="left:778.0px;width:51.0px"><span class="sx">18001009</span></div><div class="c" style="left:829.0px;width:104.5px"><span class="sx">2017-09-24T15:03:37</span></div><div class="c" style="left:933.5px;width:65.0px"><span class="sx"><span class="k">过账成功</span></span></div><div class="c" style="left:998.5px;width:102.5px"><span class="sx">2017-09-24 15:03:37</span></div></div><div class="r alt" style="top:201px"><div class="rn">10</div><div class="cb"><i></i></div><div class="c" style="left:42.0px;width:92.0px"><span class="sx">125162017092306</span></div><div class="c" style="left:134.0px;width:62.0px"><span class="sx">5800083357</span></div><div class="c" style="left:196.0px;width:37.5px"><span class="sx">00410</span></div><div class="c" style="left:233.5px;width:52.5px"><span class="sx">12222792</span></div><div class="c" style="left:286.0px;width:291.0px"><span class="sx"><span class="k">蹲式台面下骨架</span></span></div><div class="c" style="left:577.0px;width:47.0px"><span class="sx">9</span></div><div class="c" style="left:624.0px;width:66.0px"><span class="sx">4</span></div><div class="c" style="left:690.0px;width:30.0px"><span class="sx">JIA</span></div><div class="c" style="left:720.0px;width:28.0px"><span class="sx">1101</span></div><div class="c" style="left:748.0px;width:30.0px"><span class="sx">1102</span></div><div class="c" style="left:778.0px;width:51.0px"><span class="sx">11001005</span></div><div class="c" style="left:829.0px;width:104.5px"><span class="sx">2017-09-25T08:31:13</span></div><div class="c" style="left:933.5px;width:65.0px"><span class="sx"><span class="k">过账成功</span></span></div><div class="c" style="left:998.5px;width:102.5px"><span class="sx">2017-09-25 08:31:13</span></div></div><div class="r" style="top:221px"><div class="rn">11</div><div class="cb"><i></i></div><div class="c" style="left:42.0px;width:92.0px"><span class="sx">125162017092306</span></div><div class="c" style="left:134.0px;width:62.0px"><span class="sx">5800083357</span></div><div class="c" style="left:196.0px;width:37.5px"><span class="sx">00400</span></div><div class="c" style="left:233.5px;width:52.5px"><span class="sx">12222793</span></div><div class="c" style="left:286.0px;width:291.0px"><span class="sx"><span class="k">蹲式铰链支架</span></span></div><div class="c" style="left:577.0px;width:47.0px"><span class="sx">9</span></div><div class="c" style="left:624.0px;width:66.0px"><span class="sx">1</span></div><div class="c" style="left:690.0px;width:30.0px"><span class="sx">JIA</span></div><div class="c" style="left:720.0px;width:28.0px"><span class="sx">1101</span></div><div class="c" style="left:748.0px;width:30.0px"><span class="sx">1102</span></div><div class="c" style="left:778.0px;width:51.0px"><span class="sx">11001005</span></div><div class="c" style="left:829.0px;width:104.5px"><span class="sx">2017-09-25T08:31:14</span></div><div class="c" style="left:933.5px;width:65.0px"><span class="sx"><span class="k">过账成功</span></span></div><div class="c" style="left:998.5px;width:102.5px"><span class="sx">2017-09-25 08:31:14</span></div></div><div class="r alt" style="top:241px"><div class="rn">12</div><div class="cb"><i></i></div><div class="c" style="left:42.0px;width:92.0px"><span class="sx">125162017092306</span></div><div class="c" style="left:134.0px;width:62.0px"><span class="sx">5800081722</span></div><div class="c" style="left:196.0px;width:37.5px"><span class="sx">01080</span></div><div class="c" style="left:233.5px;width:52.5px"><span class="sx">12222793</span></div><div class="c" style="left:286.0px;width:291.0px"><span class="sx"><span class="k">蹲式铰链支架</span></span></div><div class="c" style="left:577.0px;width:47.0px"><span class="sx">16</span></div><div class="c" style="left:624.0px;width:66.0px"><span class="sx">3</span></div><div class="c" style="left:690.0px;width:30.0px"><span class="sx">JIA</span></div><div class="c" style="left:720.0px;width:28.0px"><span class="sx">1101</span></div><div class="c" style="left:748.0px;width:30.0px"><span class="sx">1102</span></div><div class="c" style="left:778.0px;width:51.0px"><span class="sx">11001005</span></div><div class="c" style="left:829.0px;width:104.5px"><span class="sx">2017-09-25T08:31:14</span></div><div class="c" style="left:933.5px;width:65.0px"><span class="sx"><span class="k">过账成功</span></span></div><div class="c" style="left:998.5px;width:102.5px"><span class="sx">2017-09-25 08:31:14</span></div></div><div class="r" style="top:261px"><div class="rn">13</div><div class="cb"><i></i></div><div class="c" style="left:42.0px;width:92.0px"><span class="sx">125162017092306</span></div><div class="c" style="left:134.0px;width:62.0px"><span class="sx">5800083357</span></div><div class="c" style="left:196.0px;width:37.5px"><span class="sx">00390</span></div><div class="c" style="left:233.5px;width:52.5px"><span class="sx">12222794</span></div><div class="c" style="left:286.0px;width:291.0px"><span class="sx"><span class="k">蹲式灰水箱支架</span></span></div><div class="c" style="left:577.0px;width:47.0px"><span class="sx">9</span></div><div class="c" style="left:624.0px;width:66.0px"><span class="sx">1</span></div><div class="c" style="left:690.0px;width:30.0px"><span class="sx">JIA</span></div><div class="c" style="left:720.0px;width:28.0px"><span class="sx">1101</span></div><div class="c" style="left:748.0px;width:30.0px"><span class="sx">1102</span></div><div class="c" style="left:778.0px;width:51.0px"><span class="sx">11001005</span></div><div class="c" style="left:829.0px;width:104.5px"><span class="sx">2017-09-25T08:31:15</span></div><div class="c" style="left:933.5px;width:65.0px"><span class="sx"><span class="k">过账成功</span></span></div><div class="c" style="left:998.5px;width:102.5px"><span class="sx">2017-09-25 08:31:15</span></div></div><div class="r alt" style="top:281px"><div class="rn">14</div><div class="cb"><i></i></div><div class="c" style="left:42.0px;width:92.0px"><span class="sx">125162017092306</span></div><div class="c" style="left:134.0px;width:62.0px"><span class="sx">5800083357</span></div><div class="c" style="left:196.0px;width:37.5px"><span class="sx">00380</span></div><div class="c" style="left:233.5px;width:52.5px"><span class="sx">12222795</span></div><div class="c" style="left:286.0px;width:291.0px"><span class="sx"><span class="k">蹲式垃圾桶罩支架左</span></span></div><div class="c" style="left:577.0px;width:47.0px"><span class="sx">9</span></div><div class="c" style="left:624.0px;width:66.0px"><span class="sx">1</span></div><div class="c" style="left:690.0px;width:30.0px"><span class="sx">JIA</span></div><div class="c" style="left:720.0px;width:28.0px"><span class="sx">1101</span></div><div class="c" style="left:748.0px;width:30.0px"><span class="sx">1102</span></div><div class="c" style="left:778.0px;width:51.0px"><span class="sx">11001005</span></div><div class="c" style="left:829.0px;width:104.5px"><span class="sx">2017-09-25T08:31:16</span></div><div class="c" style="left:933.5px;width:65.0px"><span class="sx"><span class="k">过账成功</span></span></div><div class="c" style="left:998.5px;width:102.5px"><span class="sx">2017-09-25 08:31:16</span></div></div><div class="r" style="top:301px"><div class="rn">15</div><div class="cb"><i></i></div><div class="c" style="left:42.0px;width:92.0px"><span class="sx">103762016020101</span></div><div class="c" style="left:134.0px;width:62.0px"><span class="sx">5600010035</span></div><div class="c" style="left:196.0px;width:37.5px"><span class="sx">00270</span></div><div class="c" style="left:233.5px;width:52.5px"><span class="sx">12108721</span></div><div class="c" style="left:286.0px;width:291.0px"><span class="sx"><span class="k">牵引电机安装支架</span>-<span class="k">阳极氧化</span></span></div><div class="c" style="left:577.0px;width:47.0px"><span class="sx">47</span></div><div class="c" style="left:624.0px;width:66.0px"><span class="sx">30</span></div><div class="c" style="left:690.0px;width:30.0px"><span class="sx">JIA</span></div><div class="c" style="left:720.0px;width:28.0px"><span class="sx">8000</span></div><div class="c" style="left:748.0px;width:30.0px"><span class="sx">8011</span></div><div class="c" style="left:778.0px;width:51.0px"><span class="sx">3001032</span></div><div class="c" style="left:829.0px;width:104.5px"><span class="sx">2016-02-01T14:53:12</span></div><div class="c" style="left:933.5px;width:65.0px"><span class="sx"><span class="k">过账成功</span></span></div><div class="c" style="left:998.5px;width:102.5px"><span class="sx">2016-02-01 14:53:12</span></div></div><div class="r alt" style="top:321px"><div class="rn">16</div><div class="cb"><i></i></div><div class="c" style="left:42.0px;width:92.0px"><span class="sx">122072016020115</span></div><div class="c" style="left:134.0px;width:62.0px"><span class="sx">5600010415</span></div><div class="c" style="left:196.0px;width:37.5px"><span class="sx">04250</span></div><div class="c" style="left:233.5px;width:52.5px"><span class="sx">12001360</span></div><div class="c" style="left:286.0px;width:291.0px"><span class="sx"><span class="k">防水板</span>-<span class="k">激光下料</span></span></div><div class="c" style="left:577.0px;width:47.0px"><span class="sx">98</span></div><div class="c" style="left:624.0px;width:66.0px"><span class="sx">5</span></div><div class="c" style="left:690.0px;width:30.0px"><span class="sx">JIA</span></div><div class="c" style="left:720.0px;width:28.0px"><span class="sx">8000</span></div><div class="c" style="left:748.0px;width:30.0px"><span class="sx">8011</span></div><div class="c" style="left:778.0px;width:51.0px"><span class="sx">3001032</span></div><div class="c" style="left:829.0px;width:104.5px"><span class="sx">2016-02-01T14:53:55</span></div><div class="c" style="left:933.5px;width:65.0px"><span class="sx"><span class="k">过账成功</span></span></div><div class="c" style="left:998.5px;width:102.5px"><span class="sx">2016-02-01 14:53:55</span></div></div><div class="r" style="top:341px"><div class="rn">17</div><div class="cb"><i></i></div><div class="c" style="left:42.0px;width:92.0px"><span class="sx">113392015101001</span></div><div class="c" style="left:134.0px;width:62.0px"><span class="sx">5600009730</span></div><div class="c" style="left:196.0px;width:37.5px"><span class="sx">00190</span></div><div class="c" style="left:233.5px;width:52.5px"><span class="sx">12037626</span></div><div class="c" style="left:286.0px;width:291.0px"><span class="sx"><span class="k">焊接螺头</span>L=100</span></div><div class="c" style="left:577.0px;width:47.0px"><span class="sx">1298</span></div><div class="c" style="left:624.0px;width:66.0px"><span class="sx">140</span></div><div class="c" style="left:690.0px;width:30.0px"><span class="sx">JIA</span></div><div class="c" style="left:720.0px;width:28.0px"><span class="sx">8000</span></div><div class="c" style="left:748.0px;width:30.0px"><span class="sx">8011</span></div><div class="c" style="left:778.0px;width:51.0px"><span class="sx">3001032</span></div><div class="c" style="left:829.0px;width:104.5px"><span class="sx">2015-10-10T10:36:27</span></div><div class="c" style="left:933.5px;width:65.0px"><span class="sx"><span class="k">过账成功</span></span></div><div class="c" style="left:998.5px;width:102.5px"><span class="sx">2015-10-10 10:36:27</span></div></div><div class="r alt" style="top:361px"><div class="rn">18</div><div class="cb"><i></i></div><div class="c" style="left:42.0px;width:92.0px"><span class="sx">101112017092302</span></div><div class="c" style="left:134.0px;width:62.0px"><span class="sx">5800089062</span></div><div class="c" style="left:196.0px;width:37.5px"><span class="sx">01030</span></div><div class="c" style="left:233.5px;width:52.5px"><span class="sx">12202210</span></div><div class="c" style="left:286.0px;width:291.0px"><span class="sx"><span class="k">侧安装板</span></span></div><div class="c" style="left:577.0px;width:47.0px"><span class="sx">6</span></div><div class="c" style="left:624.0px;width:66.0px"><span class="sx">4</span></div><div class="c" style="left:690.0px;width:30.0px"><span class="sx">JIA</span></div><div class="c" style="left:720.0px;width:28.0px"><span class="sx">1201</span></div><div class="c" style="left:748.0px;width:30.0px"><span class="sx">1301</span></div><div class="c" style="left:778.0px;width:51.0px"><span class="sx">16001009</span></div><div class="c" style="left:829.0px;width:104.5px"><span class="sx">2017-09-23T11:02:29</span></div><div class="c" style="left:933.5px;width:65.0px"><span class="sx"><span class="k">过账成功</span></span></div><div class="c" style="left:998.5px;width:102.5px"><span class="sx">2017-09-23 11:02:29</span></div></div><div class="r" style="top:381px"><div class="rn">19</div><div class="cb"><i></i></div><div class="c" style="left:42.0px;width:92.0px"><span class="sx">113392015102002</span></div><div class="c" style="left:134.0px;width:62.0px"><span class="sx">5600009796</span></div><div class="c" style="left:196.0px;width:37.5px"><span class="sx">00030</span></div><div class="c" style="left:233.5px;width:52.5px"><span class="sx">12096170</span></div><div class="c" style="left:286.0px;width:291.0px"><span class="sx"><span class="k">座椅支架</span></span></div><div class="c" style="left:577.0px;width:47.0px"><span class="sx">14</span></div><div class="c" style="left:624.0px;width:66.0px"><span class="sx">6</span></div><div class="c" style="left:690.0px;width:30.0px"><span class="sx">JIA</span></div><div class="c" style="left:720.0px;width:28.0px"><span class="sx">8000</span></div><div class="c" style="left:748.0px;width:30.0px"><span class="sx">8011</span></div><div class="c" style="left:778.0px;width:51.0px"><span class="sx">3001038</span></div><div class="c" style="left:829.0px;width:104.5px"><span class="sx">2015-10-20T15:03:29</span></div><div class="c" style="left:933.5px;width:65.0px"><span class="sx"><span class="k">过账成功</span></span></div><div class="c" style="left:998.5px;width:102.5px"><span class="sx">2015-10-20 15:03:29</span></div></div><div class="r alt" style="top:401px"><div class="rn">20</div><div class="cb"><i></i></div><div class="c" style="left:42.0px;width:92.0px"><span class="sx">122072015102207</span></div><div class="c" style="left:134.0px;width:62.0px"><span class="sx">5600009750</span></div><div class="c" style="left:196.0px;width:37.5px"><span class="sx">05970</span></div><div class="c" style="left:233.5px;width:52.5px"><span class="sx">12100147</span></div><div class="c" style="left:286.0px;width:291.0px"><span class="sx"><span class="k">侧板</span></span></div><div class="c" style="left:577.0px;width:47.0px"><span class="sx">40</span></div><div class="c" style="left:624.0px;width:66.0px"><span class="sx">22</span></div><div class="c" style="left:690.0px;width:30.0px"><span class="sx">JIA</span></div><div class="c" style="left:720.0px;width:28.0px"><span class="sx">8000</span></div><div class="c" style="left:748.0px;width:30.0px"><span class="sx">8011</span></div><div class="c" style="left:778.0px;width:51.0px"><span class="sx">3001032</span></div><div class="c" style="left:829.0px;width:104.5px"><span class="sx">2015-10-22T13:57:34</span></div><div class="c" style="left:933.5px;width:65.0px"><span class="sx"><span class="k">过账成功</span></span></div><div class="c" style="left:998.5px;width:102.5px"><span class="sx">2015-10-22 13:57:34</span></div></div>
<div id="vs1"><div class="arr" style="left:2px;top:5px;border-bottom:5px solid #a0a0a0"></div><div class="thumb" style="left:1px;top:14px;width:11px;height:372px"></div><div class="arr" style="left:2px;top:391px;border-top:5px solid #505050"></div></div>
</div>
</div>
<div id="vs2"><div class="arr" style="left:3px;top:4px;border-left-width:3.5px;border-right-width:3.5px;border-bottom:4px solid #a3a3a3"></div><div class="thumb" style="left:2px;top:12px;width:10px;height:449px"></div><div class="arr" style="left:3px;top:501px;border-left-width:3.5px;border-right-width:3.5px;border-top:4px solid #8a8a8a"></div></div><div id="rline"></div>
<div id="foot"></div>
<div id="footline"></div>
</body></html>
